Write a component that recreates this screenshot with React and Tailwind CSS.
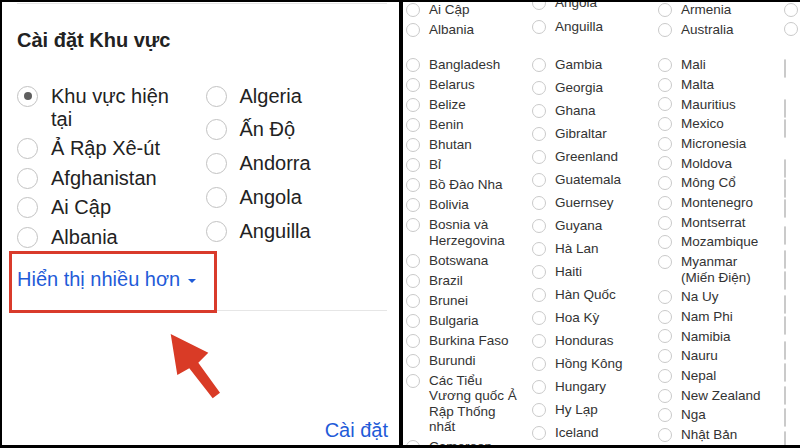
const leftA = ["Khu vực hiện tại", "Ả Rập Xê-út", "Afghanistan", "Ai Cập", "Albania"];
const leftB = ["Algeria", "Ấn Độ", "Andorra", "Angola", "Anguilla"];

const col1 = [
  "Bangladesh", "Belarus", "Belize", "Benin", "Bhutan", "Bỉ", "Bồ Đào Nha", "Bolivia",
  "Bosnia và Herzegovina", "Botswana", "Brazil", "Brunei", "Bulgaria", "Burkina Faso",
  "Burundi", "Các Tiểu Vương quốc Ả Rập Thống nhất", "Cameroon",
];
const col2 = [
  "Gambia", "Georgia", "Ghana", "Gibraltar", "Greenland", "Guatemala", "Guernsey", "Guyana",
  "Hà Lan", "Haiti", "Hàn Quốc", "Hoa Kỳ", "Honduras", "Hồng Kông", "Hungary", "Hy Lạp",
  "Iceland",
];
const col3 = [
  "Mali", "Malta", "Mauritius", "Mexico", "Micronesia", "Moldova", "Mông Cổ", "Montenegro",
  "Montserrat", "Mozambique", "Myanmar (Miến Điện)", "Na Uy", "Nam Phi", "Namibia", "Nauru",
  "Nepal", "New Zealand", "Nga", "Nhật Bản",
];
// radios of the 4th column, their text is past the window edge
const col4 = [
  "h-[40px]", "h-[20px]", "h-[40px]", "h-[20px]", "h-[20px]", "h-[27px]", "h-[24px]", "h-[21px]",
  "h-[24px]", "h-[21px]", "h-[25px]", "h-[22px]", "h-[23px]", "h-[22px]", "h-[23px]", "h-[23px]",
];

function BigRadio({ checked }) {
  return (
    <span className="mt-px flex h-[21px] w-[21px] shrink-0 items-center justify-center rounded-full border-[1.5px] border-[#c2c2c2] bg-white">
      {checked && <span className="h-2 w-2 rounded-full bg-[#5f5f5f]" />}
    </span>
  );
}

function BigItem({ label, checked }) {
  return (
    <div className="flex gap-[13px]">
      <BigRadio checked={checked} />
      <span className="w-[130px] text-[20px] leading-[23px] text-[#222]">{label}</span>
    </div>
  );
}

function SmallRadio() {
  return <span className="mt-[0.75px] h-[14px] w-[14px] shrink-0 rounded-full border border-[#cacaca] bg-white" />;
}

function SmallItem({ label }) {
  return (
    <div className="flex gap-[9px]">
      <SmallRadio />
      <span className="w-[92px] text-[13.5px] leading-[15.5px] text-[#333]">{label}</span>
    </div>
  );
}

function LeftPanel() {
  return (
    <div className="relative flex h-full w-[397px] shrink-0 flex-col overflow-hidden bg-white pl-[15px]">
      <div className="mt-px h-px w-[370px] bg-[#e6e6e6]" />
      <h2 className="mt-[24px] text-[20px] font-bold leading-[24px] text-[#222]">Cài đặt Khu vực</h2>

      <div className="mt-[32.5px] flex">
        <div className="flex w-[188.5px] flex-col gap-[6.5px]">
          {leftA.map((c, i) => (
            <BigItem key={c} label={c} checked={i === 0} />
          ))}
        </div>
        <div className="flex flex-col gap-[10.75px]">
          {leftB.map((c) => (
            <BigItem key={c} label={c} />
          ))}
        </div>
      </div>

      <div className="mt-[18.5px] flex items-center text-[20px] leading-[24px] text-[#1f5bd8]">
        Hiển thị nhiều hơn
        <svg className="ml-[8px] mt-[3px]" width="8" height="4" viewBox="0 0 8 4">
          <polygon points="0,0 8,0 4,4" fill="#1f5bd8" />
        </svg>
      </div>
      <div className="mt-[19px] h-px w-[370px] bg-[#e6e6e6]" />

      <div className="mt-auto flex justify-end pb-[3.5px] pr-[11px] text-[20px] leading-[24px] text-[#1f5bd8]">
        Cài đặt
      </div>

      {/* annotation: red box + arrow */}
      <div className="absolute left-[7px] top-[249px] h-[62px] w-[208px] border-[3px] border-[#d93b2b]" />
      <svg className="absolute left-[163px] top-[328px]" width="60" height="72" viewBox="0 0 60 72">
        <polygon
          points="5.7,4 43.3,22.7 33.3,32.7 55,62.7 47.7,68.3 24.3,38.3 12.3,45"
          fill="#d93b26"
        />
      </svg>
    </div>
  );
}

function RightPanel() {
  return (
    <div className="h-full flex-1 overflow-hidden bg-white">
      <div className="grid h-[55.25px] grid-cols-[126px_126px_126px_126px] pl-[3px]">
        <div className="flex flex-col gap-[4.5px] pt-[0.25px]">
          <SmallItem label="Ai Cập" />
          <SmallItem label="Albania" />
        </div>
        <div className="-mt-[6.75px] flex flex-col gap-[8.5px]">
          <SmallItem label="Angola" />
          <SmallItem label="Anguilla" />
        </div>
        <div className="flex flex-col gap-[4.5px] pt-[0.25px]">
          <SmallItem label="Armenia" />
          <SmallItem label="Australia" />
        </div>
        <div className="flex flex-col gap-[4.5px] pt-[0.25px]">
          <SmallItem label="" />
          <SmallItem label="" />
        </div>
      </div>

      <div className="grid grid-cols-[126px_126px_126px_126px] pl-[3px]">
        <div className="flex flex-col gap-[4.5px]">
          {col1.map((c) => (
            <SmallItem key={c} label={c} />
          ))}
        </div>
        <div className="flex flex-col gap-[7.5px]">
          {col2.map((c) => (
            <SmallItem key={c} label={c} />
          ))}
        </div>
        <div className="flex flex-col gap-[4.2px]">
          {col3.map((c) => (
            <SmallItem key={c} label={c} />
          ))}
        </div>
        <div className="flex flex-col">
          {col4.map((h, i) => (
            <div key={i} className={h}>
              <SmallRadio />
            </div>
          ))}
        </div>
      </div>
    </div>
  );
}

export default function App() {
  return (
    <div
      className="flex h-[448px] w-[800px] gap-[4px] overflow-hidden bg-black pb-[3px] pl-[2px] pt-[2px]"
      style={{ fontFamily: '"Liberation Sans", Arial, sans-serif' }}
    >
      <LeftPanel />
      <RightPanel />
    </div>
  );
}
